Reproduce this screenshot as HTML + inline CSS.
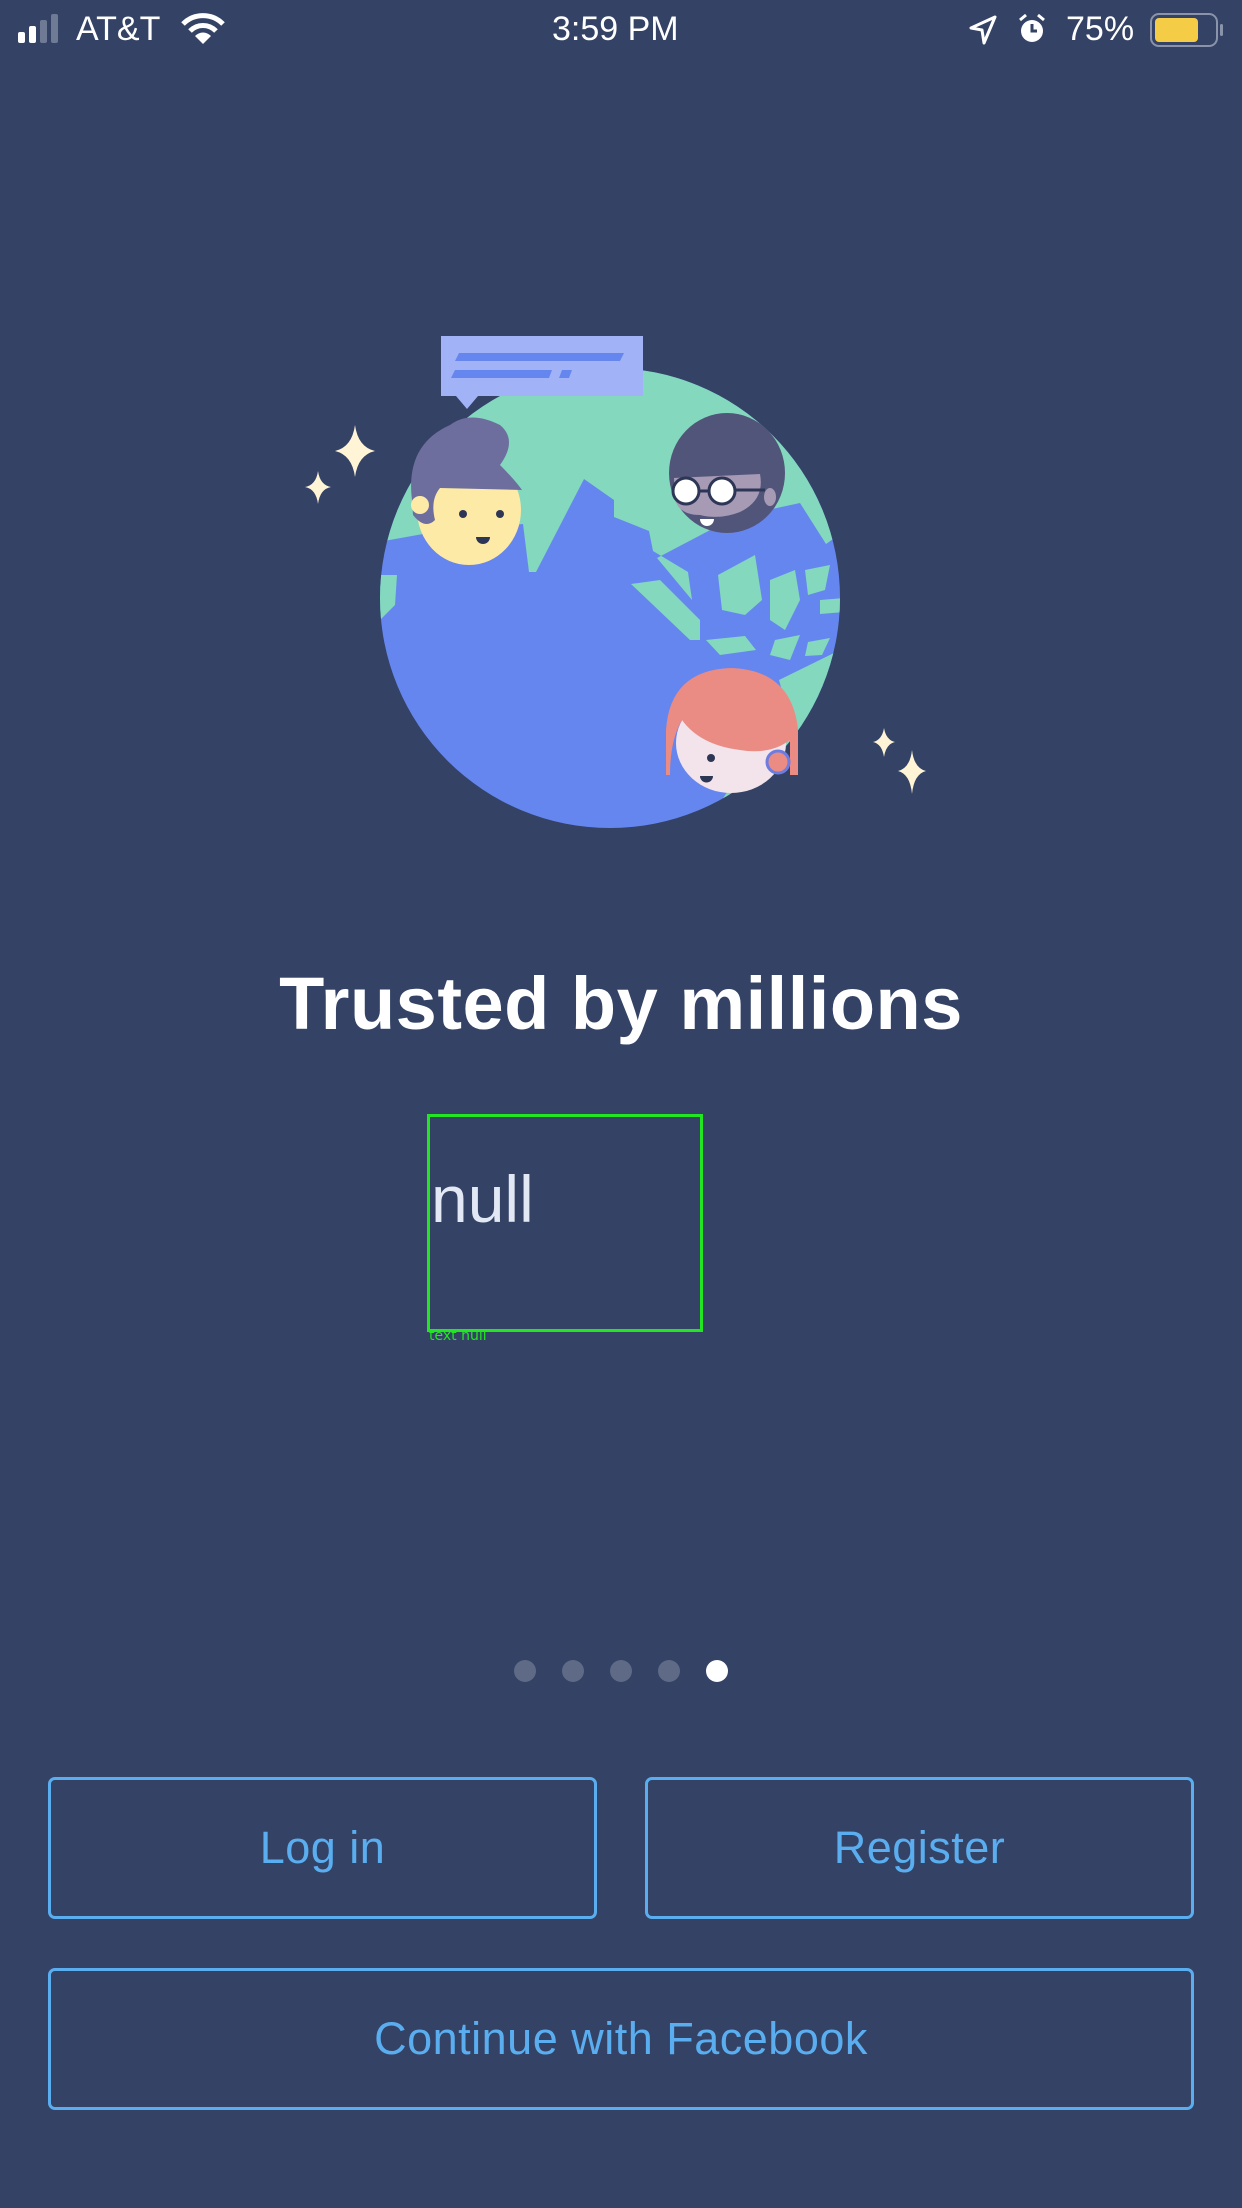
<!DOCTYPE html>
<html><head><meta charset="utf-8"><style>
html,body{margin:0;padding:0;}
body{width:1242px;height:2208px;background:#334265;position:relative;overflow:hidden;font-family:"Liberation Sans",sans-serif;}
.abs{position:absolute;}
.sb{color:#fff;font-size:34px;top:10px;}
.btn{position:absolute;border:3px solid #5aaef0;border-radius:7px;box-sizing:border-box;color:#5aaef0;font-size:45px;display:flex;align-items:center;justify-content:center;letter-spacing:0.5px;}
.dot{position:absolute;width:22px;height:22px;border-radius:50%;background:#5f6a86;top:1660px;}
</style></head><body>
<div class="abs" style="left:18px;top:32px;width:7px;height:11px;background:#fff;border-radius:2px"></div>
<div class="abs" style="left:29px;top:26px;width:7px;height:17px;background:#fff;border-radius:2px"></div>
<div class="abs" style="left:40px;top:20px;width:7px;height:23px;background:#6f7a95;border-radius:2px"></div>
<div class="abs" style="left:51px;top:14px;width:7px;height:29px;background:#6f7a95;border-radius:2px"></div>
<div class="abs sb" style="left:76px;">AT&amp;T</div>
<svg class="abs" style="left:180px;top:12px" width="46" height="34" viewBox="0 0 46 34"><path d="M3 12 A28 28 0 0 1 43 12" stroke="#fff" stroke-width="5" fill="none"/><path d="M10 19 A18 18 0 0 1 36 19" stroke="#fff" stroke-width="5" fill="none"/><path d="M23 32 L15 24 A11 11 0 0 1 31 24 Z" fill="#fff"/></svg>
<div class="abs sb" style="left:552px;">3:59 PM</div>
<svg class="abs" style="left:968px;top:14px" width="30" height="32" viewBox="0 0 30 32"><path d="M27 3 L3 14 L14 16 L16 29 Z" stroke="#fff" stroke-width="3" fill="none" stroke-linejoin="round"/></svg>
<svg class="abs" style="left:1017px;top:12px" width="30" height="34" viewBox="0 0 30 34"><circle cx="15" cy="19" r="11" fill="#fff"/><path d="M15 12 V19 H20" stroke="#334265" stroke-width="3" fill="none"/><path d="M3 8 L9 3 M27 8 L21 3" stroke="#fff" stroke-width="3"/></svg>
<div class="abs sb" style="left:1066px;">75%</div>
<div class="abs" style="left:1150px;top:13px;width:68px;height:34px;border:2px solid #8a93aa;border-radius:9px;box-sizing:border-box"></div>
<div class="abs" style="left:1155px;top:18px;width:43px;height:24px;background:#f5cc46;border-radius:4px"></div>
<div class="abs" style="left:1220px;top:24px;width:3px;height:12px;background:#8a93aa;border-radius:2px"></div>

<svg class="abs" style="left:0;top:0" width="1242" height="900" viewBox="0 0 1242 900">
<defs><clipPath id="g"><ellipse cx="610" cy="598" rx="230" ry="230"/></clipPath></defs>
<ellipse cx="610" cy="598" rx="230" ry="230" fill="#6686ef"/>
<g clip-path="url(#g)" fill="#83d8be">
<polygon points="370,360 860,360 860,520 826,544 800,503 735,517 657,558 692,600 688,572 653,551 649,531 614,517 614,500 584,479 536,572 529,572 523,524 423,534 384,541 370,545"/>
<polygon points="380,575 397,575 395,605 380,620"/>
<polygon points="718,575 755,555 762,600 745,615 722,610"/>
<polygon points="631,584 660,580 700,620 700,640 690,640"/>
<polygon points="770,580 795,570 800,600 785,630 770,620"/>
<polygon points="805,570 830,565 825,590 808,595"/>
<polygon points="820,600 845,598 845,612 820,614"/>
<polygon points="706,640 745,636 756,650 720,655"/>
<polygon points="775,640 800,635 790,660 770,655"/>
<polygon points="808,642 830,638 822,655 805,656"/>
<polygon points="779,680 840,650 850,760 800,800 722,800 760,740 790,720"/>
</g>
<rect x="441" y="336" width="202" height="60" fill="#a1b3f6"/>
<polygon points="456,396 478,396 467,409" fill="#a1b3f6"/>
<polygon points="459,353 624,353 620,361 455,361" fill="#6686ef"/>
<polygon points="455,370 552,370 549,378 451,378" fill="#6686ef"/>
<polygon points="562,370 572,370 569,378 559,378" fill="#6686ef"/>
<ellipse cx="469" cy="510" rx="52" ry="55" fill="#fdeaa6"/>
<path d="M412 500 Q405 445 450 425 Q470 410 500 425 Q518 440 500 465 Q515 480 522 490 L440 488 Q430 500 435 520 Q425 530 413 515 Z" fill="#6d6e9e"/>
<circle cx="420" cy="505" r="9" fill="#fdeaa6"/>
<circle cx="463" cy="514" r="4" fill="#2e3656"/><circle cx="500" cy="514" r="4" fill="#2e3656"/>
<path d="M476 537 h14 a7 7 0 0 1 -14 0z" fill="#2e3656"/>
<ellipse cx="727" cy="473" rx="58" ry="60" fill="#52557a"/>
<path d="M674 478 L760 474 Q765 500 740 512 Q720 520 700 515 Q680 515 675 500 Z" fill="#a69ab5"/>
<ellipse cx="770" cy="497" rx="6" ry="9" fill="#a69ab5"/>
<circle cx="686" cy="491" r="13" fill="#fff" stroke="#2e3656" stroke-width="3"/>
<circle cx="722" cy="491" r="13" fill="#fff" stroke="#2e3656" stroke-width="3"/>
<path d="M699 491 h10 M735 490 h30" stroke="#2e3656" stroke-width="3"/>
<path d="M700 519 h14 a7 7 0 0 1 -14 0z" fill="#fff"/>
<ellipse cx="731" cy="743" rx="55" ry="50" fill="#f2e4ea"/>
<path d="M666 775 L666 730 Q670 670 731 668 Q792 670 798 730 L798 775 L790 775 L790 740 Q770 755 740 750 Q700 745 682 720 Q670 740 670 775 Z" fill="#ea8b84"/>
<circle cx="711" cy="758" r="4" fill="#2e3656"/>
<path d="M700 776 h13 a6.5 6.5 0 0 1 -13 0z" fill="#2e3656"/>
<circle cx="778" cy="762" r="11" fill="#ea8b84" stroke="#6d7ce0" stroke-width="3"/>
<g fill="#fff5d6">
<path d="M355 425 Q358 447 375 451 Q358 455 355 477 Q352 455 335 451 Q352 447 355 425Z"/>
<path d="M318 471 Q320 485 331 487 Q320 489 318 504 Q316 489 305 487 Q316 485 318 471Z"/>
<path d="M884 728 Q886 740 895 742 Q886 744 884 757 Q882 744 873 742 Q882 740 884 728Z"/>
<path d="M912 750 Q914 768 926 771 Q914 774 912 794 Q910 774 898 771 Q910 768 912 750Z"/>
</g>
</svg>

<div class="abs" style="left:0;width:1242px;top:961px;text-align:center;color:#fff;font-weight:bold;font-size:74px;letter-spacing:0.5px;">Trusted by millions</div>

<div class="abs" style="left:427px;top:1114px;width:276px;height:218px;border:3px solid #22e622;box-sizing:border-box"></div>
<div class="abs" style="left:431px;top:1161px;font-size:66px;color:#e3e8f5;">null</div>
<div class="abs" style="left:429px;top:1328px;font-size:14px;color:#22e622;font-family:'DejaVu Sans',sans-serif">text null</div>

<div class="dot" style="left:514px"></div>
<div class="dot" style="left:562px"></div>
<div class="dot" style="left:610px"></div>
<div class="dot" style="left:658px"></div>
<div class="dot" style="left:706px;background:#fff"></div>

<div class="btn" style="left:48px;top:1777px;width:549px;height:142px;">Log in</div>
<div class="btn" style="left:645px;top:1777px;width:549px;height:142px;">Register</div>
<div class="btn" style="left:48px;top:1968px;width:1146px;height:142px;">Continue with Facebook</div>
</body></html>
